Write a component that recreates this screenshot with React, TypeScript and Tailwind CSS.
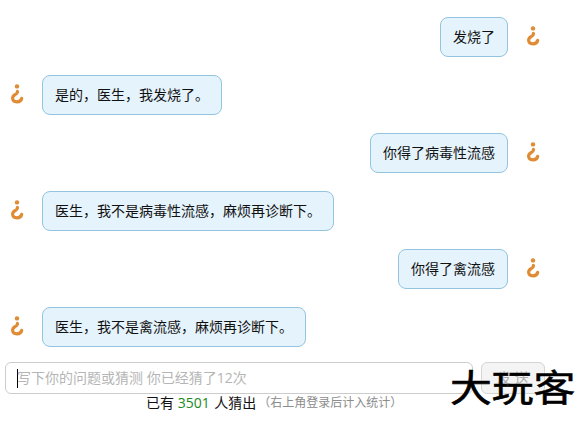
import clsx from "clsx";

type Message = {
  id: number;
  from: "doctor" | "patient";
  text: string;
};

const messages: Message[] = [
  { id: 1, from: "doctor", text: "发烧了" },
  { id: 2, from: "patient", text: "是的，医生，我发烧了。" },
  { id: 3, from: "doctor", text: "你得了病毒性流感" },
  { id: 4, from: "patient", text: "医生，我不是病毒性流感，麻烦再诊断下。" },
  { id: 5, from: "doctor", text: "你得了禽流感" },
  { id: 6, from: "patient", text: "医生，我不是禽流感，麻烦再诊断下。" },
];

function Avatar() {
  return (
    <svg width="14" height="20" viewBox="0 0 14 20" fill="none" className="relative -top-px shrink-0">
      <circle cx="7" cy="2.4" r="2.2" fill="#e08c34" />
      <path
        d="M7.4 7.4V8.2C7.4 10.4 2.6 10.4 2.6 14C2.6 16.6 4.6 17.8 6.9 17.8C9.4 17.8 11.3 16.4 11.7 14.4"
        stroke="#e08c34"
        strokeWidth="3.2"
        strokeLinecap="round"
      />
    </svg>
  );
}

function MessageRow({ message }: { message: Message }) {
  const isDoctor = message.from === "doctor";

  return (
    <div className={clsx("flex h-10 items-center gap-[18px]", isDoctor ? "flex-row-reverse pr-[46px]" : "pl-2.5")}>
      <Avatar />
      <div className="flex h-10 items-center whitespace-nowrap rounded-lg border border-[#93c5e0] bg-[#e5f3fc] px-3 text-sm text-[#111]">
        {message.text}
      </div>
    </div>
  );
}

export default function App() {
  return (
    <div className="relative h-[422px] w-[586px] overflow-hidden bg-white pt-[17px] font-['Open_Sans','Noto_Sans_CJK_SC',sans-serif]">
      <div className="flex flex-col gap-[18px]">
        {messages.map((message) => (
          <MessageRow key={message.id} message={message} />
        ))}
      </div>

      <div className="mt-[15px] flex gap-2 pl-[5px]">
        <div className="flex h-8 w-[468px] items-center rounded-md border border-[#ccc] pl-[11px] text-sm text-[#b5b5b5]">
          <span className="-mr-px h-[19px] w-px bg-black" />
          写下你的问题或猜测 你已经猜了12次
        </div>
        <button className="h-8 w-16 rounded-md border border-[#d4d4d4] bg-[#f4f4f4] text-sm text-[#aaa]">
          发 送
        </button>
      </div>

      <div className="flex items-center pl-[146px] text-sm leading-[18px] text-[#111]">
        <span className="whitespace-pre">
          已有 <span className="mr-px text-[#1a8a1a]">3501</span> 人猜出
        </span>
        <span className="ml-0.5 text-xs leading-[18px] text-[#8c8c8c]">（右上角登录后计入统计）</span>
      </div>

      {/* site watermark */}
      <div className="absolute left-[450px] top-[365px] origin-left scale-x-[1.13] whitespace-nowrap font-['Noto_Sans_CJK_SC',sans-serif] text-[37px] font-normal leading-[42px] text-black [-webkit-text-stroke:0.6px_#000] [text-shadow:0_0_2px_#fff]">
        大玩客
      </div>
    </div>
  );
}
